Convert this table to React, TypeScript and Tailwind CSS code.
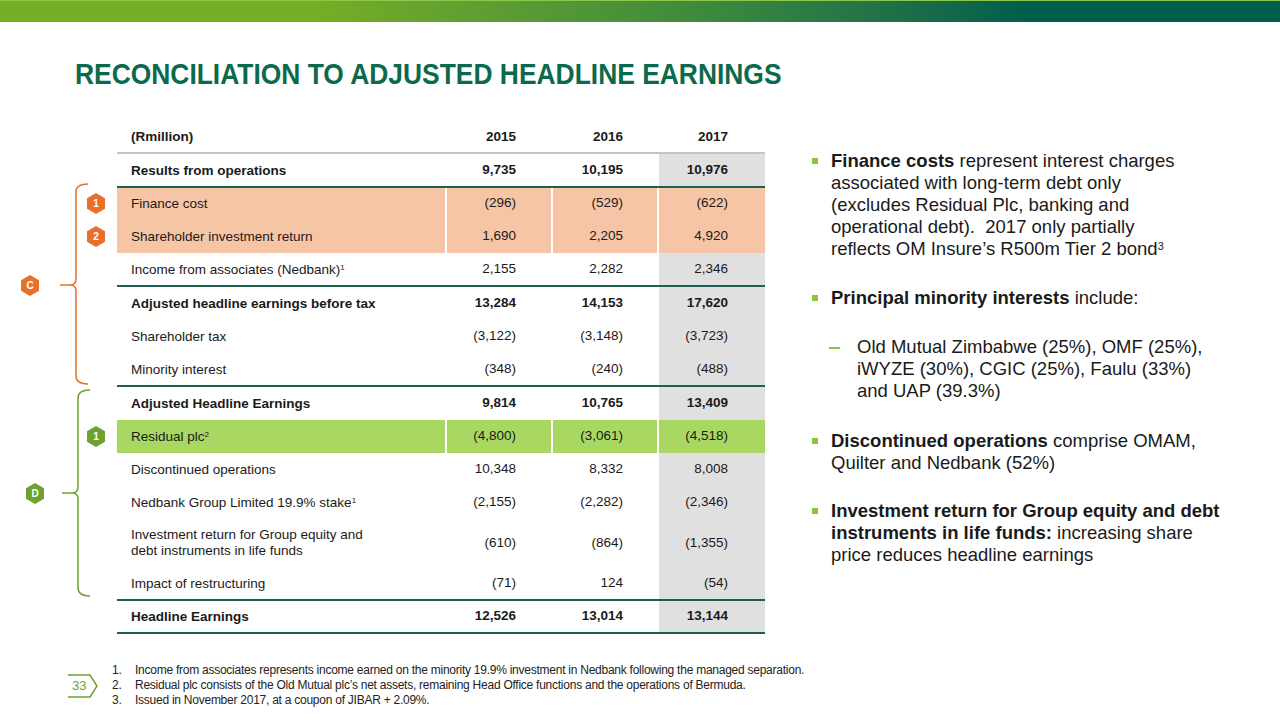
import React from 'react';

type Row = {
  label: React.ReactNode;
  v: [string, string, string];
  bold?: boolean;
  hl?: 'orange' | 'green';
  hex?: string;
  tall?: boolean;
  line?: 'tight' | 'loose';
};

const rows: Row[] = [
  { label: 'Results from operations', v: ['9,735', '10,195', '10,976'], bold: true, line: 'tight' },
  { label: 'Finance cost', v: ['(296)', '(529)', '(622)'], hl: 'orange', hex: '1' },
  { label: 'Shareholder investment return', v: ['1,690', '2,205', '4,920'], hl: 'orange', hex: '2' },
  {
    label: (
      <>
        Income from associates (Nedbank)<sup className="text-[8px]">1</sup>
      </>
    ),
    v: ['2,155', '2,282', '2,346'],
    line: 'loose',
  },
  { label: 'Adjusted headline earnings before tax', v: ['13,284', '14,153', '17,620'], bold: true },
  { label: 'Shareholder tax', v: ['(3,122)', '(3,148)', '(3,723)'] },
  { label: 'Minority interest', v: ['(348)', '(240)', '(488)'], line: 'loose' },
  { label: 'Adjusted Headline Earnings', v: ['9,814', '10,765', '13,409'], bold: true },
  {
    label: (
      <>
        Residual plc<sup className="text-[8px]">2</sup>
      </>
    ),
    v: ['(4,800)', '(3,061)', '(4,518)'],
    hl: 'green',
    hex: '1',
  },
  { label: 'Discontinued operations', v: ['10,348', '8,332', '8,008'] },
  {
    label: (
      <>
        Nedbank Group Limited 19.9% stake<sup className="text-[8px]">1</sup>
      </>
    ),
    v: ['(2,155)', '(2,282)', '(2,346)'],
  },
  {
    label: (
      <>
        Investment return for Group equity and
        <br />
        debt instruments in life funds
      </>
    ),
    v: ['(610)', '(864)', '(1,355)'],
    tall: true,
  },
  { label: 'Impact of restructuring', v: ['(71)', '124', '(54)'], line: 'tight' },
  { label: 'Headline Earnings', v: ['12,526', '13,014', '13,144'], bold: true, line: 'tight' },
];

const Hex = ({ children, color }: { children: React.ReactNode; color: string }) => (
  <div
    className={`w-[18px] h-[21px] flex items-center justify-center text-white text-[10px] font-bold [clip-path:polygon(50%_0,100%_25%,100%_75%,50%_100%,0_75%,0_25%)] ${color}`}
  >
    {children}
  </div>
);

const Brackets = () => (
  <svg className="absolute left-0 top-0" width="117" height="520" viewBox="0 0 117 520" fill="none">
    {/* orange bracket C */}
    <path
      d="M88 64 Q76 64 76 72 L76 159 Q76 165 70 165 L60 165 M70 165 Q76 165 76 171 L76 256 Q76 264 88 264"
      stroke="#e8702a"
      strokeWidth="1.5"
    />
    {/* green bracket D */}
    <path
      d="M90 270 Q78 270 78 278 L78 367 Q78 373 72 373 L62 373 M72 373 Q78 373 78 379 L78 468 Q78 476 90 476"
      stroke="#6ea12d"
      strokeWidth="1.5"
    />
  </svg>
);

const Table = () => (
  <div className="relative w-[765px] shrink-0 text-[13.5px] text-[#1a1a1a]">
    <Brackets />
    <div className="absolute left-[21px] top-[155px]">
      <Hex color="bg-[#e8702a]">C</Hex>
    </div>
    <div className="absolute left-[26px] top-[363px]">
      <Hex color="bg-[#6ea12d]">D</Hex>
    </div>

    {/* header */}
    <div className="flex h-[32px] items-center pt-[3px] font-bold">
      <div className="w-[117px]" />
      <div className="w-[328px] pl-[14px]">(Rmillion)</div>
      <div className="w-[106px] pr-[35px] text-right">2015</div>
      <div className="w-[106px] pr-[34px] text-right">2016</div>
      <div className="w-[108px] pr-[37px] text-right">2017</div>
    </div>
    <div className="flex">
      <div className="w-[117px]" />
      <div className="w-[648px] h-[2px] bg-[#c4c4c4]" />
    </div>

    {rows.map((r, i) => {
      const bg = r.hl === 'orange' ? 'bg-[#f6c5a6]' : r.hl === 'green' ? 'bg-[#a8d862]' : '';
      const last = r.hl ? bg : 'bg-[#e0e0e0]';
      const h = r.tall ? 'h-[48px]' : 'h-[33px]';
      return (
        <React.Fragment key={i}>
          <div className={`flex ${h} ${r.bold ? 'font-bold' : ''}`}>
            <div className="w-[117px] flex items-center justify-end pr-[12px]">
              {r.hex && (
                <Hex color={r.hl === 'green' ? 'bg-[#6ea12d]' : 'bg-[#e8702a]'}>{r.hex}</Hex>
              )}
            </div>
            <div className={`w-[328px] pl-[14px] flex items-center leading-[16px] ${bg}`}>
              <span>{r.label}</span>
            </div>
            <div className="w-[2px]" />
            <div className={`w-[104px] pr-[35px] flex items-center justify-end ${bg}`}>{r.v[0]}</div>
            <div className="w-[2px]" />
            <div className={`w-[104px] pr-[34px] flex items-center justify-end ${bg}`}>{r.v[1]}</div>
            <div className="w-[2px]" />
            <div className={`w-[106px] pr-[37px] flex items-center justify-end ${last}`}>{r.v[2]}</div>
          </div>
          {r.line && (
            <div className={`relative z-10 flex ${r.line === 'tight' ? '-my-[1px]' : '-mt-[1px]'}`}>
              <div className="w-[117px]" />
              <div className="w-[648px] h-[2px] bg-[#1f5f50]" />
            </div>
          )}
        </React.Fragment>
      );
    })}
  </div>
);

const Bullet = ({ children, className }: { children: React.ReactNode; className?: string }) => (
  <div className={`flex ${className ?? ''}`}>
    <div className="w-[19px] shrink-0 pt-[8px]">
      <div className="w-[6px] h-[6px] bg-[#8cc63f]" />
    </div>
    <div>{children}</div>
  </div>
);

const Notes = () => (
  <div className="pl-[47px] pt-[30px] whitespace-nowrap text-[18.5px] leading-[22px] text-[#1a1a1a]">
    <Bullet>
      <b>Finance costs</b> represent interest charges
      <br />
      associated with long-term debt only
      <br />
      (excludes Residual Plc, banking and
      <br />
      operational debt).&nbsp; 2017 only partially
      <br />
      reflects OM Insure’s R500m Tier 2 bond<sup className="text-[11px]">3</sup>
    </Bullet>
    <Bullet className="mt-[27px]">
      <b>Principal minority interests</b> include:
    </Bullet>
    <div className="flex mt-[27px] pl-[17px]">
      <div className="w-[28px] shrink-0 pt-[11px]">
        <div className="w-[11px] h-[2px] bg-[#8cc63f]" />
      </div>
      <div>
        Old Mutual Zimbabwe (25%), OMF (25%),
        <br />
        iWYZE (30%), CGIC (25%), Faulu (33%)
        <br />
        and UAP (39.3%)
      </div>
    </div>
    <Bullet className="mt-[28px]">
      <b>Discontinued operations</b> comprise OMAM,
      <br />
      Quilter and Nedbank (52%)
    </Bullet>
    <Bullet className="mt-[26px]">
      <b>Investment return for Group equity and debt</b>
      <br />
      <b>instruments in life funds:</b> increasing share
      <br />
      price reduces headline earnings
    </Bullet>
  </div>
);

const Footer = () => (
  <div className="mt-auto flex items-center pb-[12px] pl-[66px]">
    <div className="relative w-[34px] h-[24px] flex items-center pl-[6px] text-[13px] text-[#6ea12d]">
      <svg className="absolute left-0 top-0" width="34" height="24" viewBox="0 0 34 24" fill="none">
        <path d="M2 1 L24 1 L31 12 L24 23 L2 23" stroke="#6ea12d" strokeWidth="1.5" />
      </svg>
      <span className="relative">33</span>
    </div>
    <ol className="ml-[12px] text-[12px] leading-[15px] tracking-[-0.25px] text-[#222]">
      <li className="flex">
        <span className="w-[23px]">1.</span>
        Income from associates represents income earned on the minority 19.9% investment in Nedbank following the managed separation.
      </li>
      <li className="flex">
        <span className="w-[23px]">2.</span>
        Residual plc consists of the Old Mutual plc’s net assets, remaining Head Office functions and the operations of Bermuda.
      </li>
      <li className="flex">
        <span className="w-[23px]">3.</span>
        Issued in November 2017, at a coupon of JIBAR + 2.09%.
      </li>
    </ol>
  </div>
);

export default function App() {
  return (
    <div className="w-[1280px] h-[720px] flex flex-col bg-white overflow-hidden font-['Liberation_Sans',Arial,sans-serif]">
      <div className="h-[22px] bg-gradient-to-r from-[#75ad24] from-25% via-[#3d8a3c] via-55% to-[#005e4c] to-80% border-t border-[#8cc84a]" />
      <div className="pl-[75px] mt-[34px] h-[36px]">
        <h1 className="origin-left scale-x-[0.88] whitespace-nowrap text-[30px] leading-[36px] font-bold text-[#0b6a4b]">
          RECONCILIATION TO ADJUSTED HEADLINE EARNINGS
        </h1>
      </div>
      <div className="flex mt-[28px]">
        <Table />
        <Notes />
      </div>
      <Footer />
    </div>
  );
}
